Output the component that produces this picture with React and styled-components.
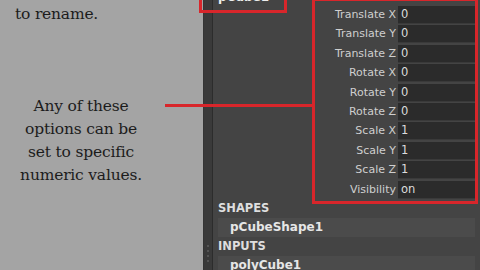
import React from "react";
import styled, { createGlobalStyle } from "styled-components";

const Global = createGlobalStyle`
  html, body { margin: 0; padding: 0; background: #a4a4a4; }
  #root { width: 480px; height: 270px; }
`;

const Stage = styled.div`
  position: relative;
  width: 480px;
  height: 270px;
  overflow: hidden;
  display: flex;
`;

const Caption = styled.div`
  width: 203px;
  flex: none;
  background: #a4a4a4;
  color: #1c1c1c;
  font-family: "DejaVu Serif", "Liberation Serif", serif;
  font-size: 15.5px;
  line-height: 23px;
  padding-top: 3px;
  box-sizing: border-box;
`;

const Note = styled.p`
  margin: 0;
  margin-top: ${(p) => p.$gap || 0}px;
  padding-left: ${(p) => (p.$center ? 0 : 15)}px;
  width: ${(p) => (p.$center ? "162px" : "auto")};
  text-align: ${(p) => (p.$center ? "center" : "left")};
  letter-spacing: -0.2px;
`;

const Editor = styled.div`
  flex: 1;
  display: flex;
  background: #444444;
`;

const Strip = styled.div`
  width: 10px;
  flex: none;
  background: #3a3a3a;
  border-left: 1px solid #353535;
  border-right: 1px solid #2c2c2c;
  box-sizing: border-box;
  display: flex;
  flex-direction: column;
  justify-content: flex-end;
  align-items: center;
  padding-bottom: 8px;
  gap: 3px;
`;

const Grip = styled.span`
  width: 2px;
  height: 2px;
  background: #555;
`;

const Main = styled.div`
  flex: 1;
  display: flex;
  flex-direction: column;
  font-family: "DejaVu Sans", "Liberation Sans", sans-serif;
  color: #d6d6d6;
`;

const NameRow = styled.div`
  height: 17px;
  margin-top: -11px;
  padding-left: 5px;
  font-weight: bold;
  font-size: 12px;
  line-height: 17px;
  color: #eeeeee;
`;

const AttrList = styled.div`
  display: flex;
  flex-direction: column;
  gap: 2px;
  padding-bottom: 1px;
`;

const AttrRow = styled.div`
  display: grid;
  grid-template-columns: 183px 77px;
  column-gap: 2px;
  height: 17.4px;
  align-items: stretch;
`;

const Label = styled.div`
  text-align: right;
  font-size: 11px;
  line-height: 17.4px;
  color: #cfcfcf;
`;

const Field = styled.div`
  background: #2b2b2b;
  border-bottom: 1px solid #3a3a3a;
  box-sizing: border-box;
  font-size: 11.5px;
  line-height: 17px;
  padding-left: 3px;
  color: #dcdcdc;
`;

const Section = styled.div`
  height: 19px;
  line-height: 19px;
  padding-left: 5px;
  font-weight: bold;
  font-size: 11.5px;
  color: #dedede;
`;

const Node = styled.div`
  height: 19px;
  line-height: 19px;
  margin: 0 5px 0 5px;
  padding-left: 12px;
  background: #4b4b4b;
  font-weight: bold;
  font-size: 12px;
  color: #e6e6e6;
`;

const Highlight = styled.div`
  position: absolute;
  border: 3px solid #d8262b;
  box-sizing: border-box;
  pointer-events: none;
`;

const Pointer = styled.div`
  position: absolute;
  height: 3px;
  background: #d8262b;
`;

const attrs = [
  ["Translate X", "0"],
  ["Translate Y", "0"],
  ["Translate Z", "0"],
  ["Rotate X", "0"],
  ["Rotate Y", "0"],
  ["Rotate Z", "0"],
  ["Scale X", "1"],
  ["Scale Y", "1"],
  ["Scale Z", "1"],
  ["Visibility", "on"],
];

export default function App() {
  return (
    <>
      <Global />
      <Stage>
        <Caption>
          <Note>to rename.</Note>
          <Note $center $gap={69}>
            Any of these
            <br />
            options can be
            <br />
            set to specific
            <br />
            numeric values.
          </Note>
        </Caption>
        <Editor>
          <Strip>
            <Grip />
            <Grip />
            <Grip />
            <Grip />
          </Strip>
          <Main>
            <NameRow>pCube1</NameRow>
            <AttrList>
              {attrs.map(([l, v]) => (
                <AttrRow key={l}>
                  <Label>{l}</Label>
                  <Field>{v}</Field>
                </AttrRow>
              ))}
            </AttrList>
            <Section>SHAPES</Section>
            <Node>pCubeShape1</Node>
            <Section>INPUTS</Section>
            <Node>polyCube1</Node>
          </Main>
        </Editor>
        <Highlight style={{ left: 199, top: -5, width: 88, height: 18 }} />
        <Highlight style={{ left: 312, top: -2, width: 166, height: 206 }} />
        <Pointer style={{ left: 165, top: 104, width: 148 }} />
      </Stage>
    </>
  );
}
